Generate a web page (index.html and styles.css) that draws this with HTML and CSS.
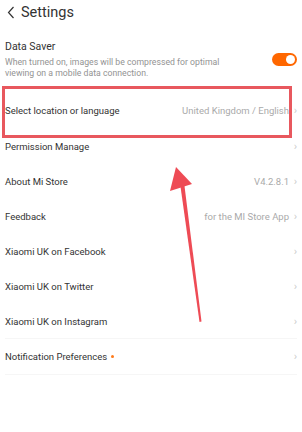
FILE: index.html
```html
<!DOCTYPE html>
<html>
<head>
<meta charset="utf-8">
<link rel="stylesheet" href="styles.css">
</head>
<body>
<div class="page">
  <header class="topbar">
    <svg class="back" width="8" height="13" viewBox="0 0 8 13"><path d="M6.5 1 L1.5 6.5 L6.5 12" fill="none" stroke="#333" stroke-width="1.2"/></svg>
    <span class="title">Settings</span>
  </header>

  <section class="saver">
    <div class="saver-text">
      <div class="label">Data Saver</div>
      <div class="desc">When turned on, images will be compressed for optimal viewing on a mobile data connection.</div>
    </div>
    <div class="toggle"><span class="knob"></span></div>
  </section>

  <ul class="list">
    <li class="row"><span class="label">Select location or language</span><span class="value">United Kingdom / English</span><span class="chev">›</span></li>
    <li class="row"><span class="label">Permission Manage</span><span class="value"></span><span class="chev">›</span></li>
    <li class="row"><span class="label">About Mi Store</span><span class="value">V4.2.8.1</span><span class="chev">›</span></li>
    <li class="row"><span class="label">Feedback</span><span class="value">for the MI Store App</span><span class="chev">›</span></li>
    <li class="row"><span class="label">Xiaomi UK on Facebook</span><span class="value"></span><span class="chev">›</span></li>
    <li class="row"><span class="label">Xiaomi UK on Twitter</span><span class="value"></span><span class="chev">›</span></li>
    <li class="row divided"><span class="label">Xiaomi UK on Instagram</span><span class="value"></span><span class="chev">›</span></li>
    <li class="row divided"><span class="label">Notification Preferences <span class="dot"></span></span><span class="value"></span><span class="chev">›</span></li>
  </ul>

  <div class="highlight-box"></div>
  <svg class="arrow" width="302" height="432" viewBox="0 0 302 432">
    <path d="M199.5 322 L201.5 321.5 L184 182 L180 183 Z" fill="#ee4b55"/>
    <path d="M176 167 L170 191 L192 184 Z" fill="#ee4b55"/>
  </svg>
</div>
</body>
</html>
```
FILE: styles.css
```css
* { box-sizing: border-box; margin: 0; padding: 0; }
body { margin: 0; background: #fff; font-family: Roboto, "Noto Sans", sans-serif; color: #333; }
.page { position: relative; width: 302px; height: 432px; overflow: hidden; }
.topbar { display: flex; align-items: center; height: 24px; padding-left: 7px; gap: 6px; }
.back { display: block; }
.title { font-size: 14.5px; color: #333; }
.saver { display: flex; align-items: flex-start; padding: 16px 5px 0 5px; height: 69.4px; }
.saver-text { flex: 1; }
.saver .label { font-size: 10.5px; line-height: 14px; color: #333; }
.desc { font-size: 8.7px; line-height: 11px; color: #939393; margin-top: 3px; width: 240px; }
.toggle { width: 25px; height: 13px; background: #ff6700; border-radius: 6.5px; position: relative; margin-top: 13px; }
.knob { position: absolute; right: 2px; top: 2px; width: 9px; height: 9px; border-radius: 50%; background: #fff; }
.list { list-style: none; }
.row { display: flex; align-items: center; height: 35.15px; padding: 0 5px; font-size: 9.5px; }
.row .label { flex: 1; color: #333; display: flex; align-items: center; gap: 4px; }
.row .value { color: #aaa; font-size: 9.5px; }
.chev { color: #ccc; font-size: 11px; width: 8px; text-align: right; }
.divided { border-bottom: 1px solid #f6f6f6; margin: 0 5px; padding: 0; }
.dot { display: inline-block; width: 3px; height: 3px; border-radius: 50%; background: #ff7a1a; }
.highlight-box { position: absolute; left: 2px; top: 86px; width: 290px; height: 52px; border: 3px solid #e8585e; pointer-events: none; }
.arrow { position: absolute; left: 0; top: 0; pointer-events: none; }
```
